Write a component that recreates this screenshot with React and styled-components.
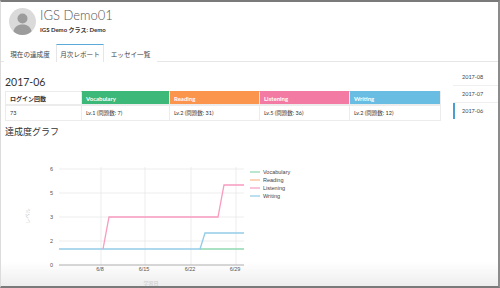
import { createGlobalStyle, styled } from "styled-components";

const GlobalStyle = createGlobalStyle`
  html, body {
    margin: 0;
    padding: 0;
    background: #fff;
  }
  body {
    font-family: "Lato", "Noto Sans CJK JP", sans-serif;
    color: #333;
  }
`;

const Frame = styled.div`
  width: 500px;
  height: 288px;
  box-sizing: border-box;
  border-top: 2px solid #7a7a7a;
  border-right: 2px solid #8c8c8c;
  border-bottom: 2px solid #7a7a7a;
  border-left: 1px solid #dcdcdc;
  background: linear-gradient(to bottom, #fff 0, #fff 260px, #ececec 286px);
  overflow: hidden;
`;

const Header = styled.header`
  display: flex;
  align-items: center;
  gap: 4px;
  padding: 5px 0 0 8px;
  height: 29px;
`;

const Avatar = styled.div`
  width: 27px;
  height: 27px;
  border-radius: 50%;
  background: #dadada;
  overflow: hidden;
  flex-shrink: 0;

  svg {
    display: block;
  }
`;

const NameBlock = styled.div`
  display: flex;
  flex-direction: column;
  padding-bottom: 2px;
`;

const UserName = styled.div`
  font-size: 13px;
  font-weight: 300;
  color: #555;
  line-height: 15px;
`;

const UserSub = styled.div`
  font-size: 6px;
  font-weight: 700;
  color: #333;
  line-height: 9px;
  margin-top: 2px;
`;

const TabBar = styled.nav`
  display: flex;
  margin-top: 8px;
  padding-left: 3px;
  height: 17px;
  border-bottom: 1px solid #e6e6e6;
`;

const Tab = styled.div`
  display: flex;
  align-items: center;
  justify-content: center;
  box-sizing: border-box;
  height: 18px;
  width: ${(props) => props.$w}px;
  font-size: 6.6px;
  white-space: nowrap;
  color: #444;
  background: #fff;
  border-top: 1px solid ${(props) => (props.$active ? "#5aaad8" : "transparent")};
  border-left: 1px solid ${(props) => (props.$active ? "#e6e6e6" : "transparent")};
  border-right: 1px solid ${(props) => (props.$active ? "#e6e6e6" : "transparent")};
`;

const Body = styled.div`
  display: flex;
`;

const Main = styled.main`
  width: 436px;
  padding-left: 4px;
  padding-top: 14px;
`;

const MonthTitle = styled.h2`
  margin: 0;
  font-size: 10.5px;
  font-weight: 400;
  color: #333;
  line-height: 13px;
`;

const Table = styled.div`
  display: grid;
  grid-template-columns: 75px 88px 90px 90px 91px;
  grid-template-rows: 14px 15px;
  margin-top: 2px;
  border: 1px solid #ececec;
  border-top: none;
`;

const Cell = styled.div`
  display: flex;
  align-items: center;
  padding-left: 4px;
  font-size: ${(props) => (props.$head ? "6px" : "5.5px")};
  font-weight: ${(props) => (props.$head ? 700 : 400)};
  color: ${(props) => (props.$bg ? "#fff" : "#333")};
  background: ${(props) => props.$bg || "#fff"};
  border-top: 1px solid ${(props) => props.$bg || "#ececec"};
  border-left: ${(props) => (props.$first ? "none" : "1px solid #ececec")};
  border-bottom: ${(props) => (props.$head ? "1px solid #ececec" : "none")};
  box-sizing: border-box;
  white-space: nowrap;
`;

const GraphTitle = styled.h3`
  margin: 5px 0 0;
  font-size: 9px;
  font-weight: 400;
  color: #333;
  line-height: 11px;
`;

const Chart = styled.svg`
  display: block;
  margin: 2px 0 0 -4px;
  font-family: "Liberation Sans", "Noto Sans CJK JP", sans-serif;
`;

const SideNav = styled.aside`
  margin-left: 12px;
  width: 46px;
  padding-top: 7px;
`;

const NavItem = styled.div`
  height: 16px;
  display: flex;
  align-items: center;
  padding-left: 9px;
  font-size: 5.5px;
  color: #444;
  border-bottom: ${(props) => (props.$last ? "none" : "1px solid #efefef")};
  box-shadow: ${(props) => (props.$active ? "inset 2px 0 0 #4a9fd0" : "none")};
`;

const skills = [
  { name: "Vocabulary", color: "#3cb878", value: "Lv.1 (問題数: 7)", line: "#8fd8b0" },
  { name: "Reading", color: "#fb944d", value: "Lv.2 (問題数: 31)", line: "#f7b98a" },
  { name: "Listening", color: "#f37aa2", value: "Lv.5 (問題数: 36)", line: "#f79bbf" },
  { name: "Writing", color: "#69bce2", value: "Lv.2 (問題数: 12)", line: "#92cbe8" },
];

const tabs = [
  { label: "現在の達成度", w: 52 },
  { label: "月次レポート", w: 48, active: true },
  { label: "エッセイ一覧", w: 53 },
];

const months = ["2017-08", "2017-07", "2017-06"];

// chart coordinates are page coordinates minus this offset
const OY = 138;

function LevelChart() {
  const yTicks = [
    { label: "6", y: 168 },
    { label: "5", y: 192 },
    { label: "3", y: 216 },
    { label: "2", y: 240 },
    { label: "0", y: 264 },
  ];
  const xTicks = [
    { label: "6/8", x: 100 },
    { label: "6/15", x: 144 },
    { label: "6/22", x: 190 },
    { label: "6/29", x: 235 },
  ];
  const y = (v) => v - OY;

  return (
    <Chart width="300" height="148" viewBox="0 0 300 148">
      {yTicks.slice(0, 4).map((t) => (
        <line key={t.label} x1="58" x2="243" y1={y(t.y)} y2={y(t.y)} stroke="#e8e8e8" strokeWidth="0.8" />
      ))}
      {xTicks.map((t) => (
        <line key={t.label} x1={t.x} x2={t.x} y1={y(166)} y2={y(264)} stroke="#e8e8e8" strokeWidth="0.8" />
      ))}
      <line x1="58" x2="243" y1={y(264)} y2={y(264)} stroke="#9a9a9a" strokeWidth="0.8" />
      {yTicks.map((t) => (
        <text key={t.label} x="52" y={y(t.y) + 2} fontSize="5.5" fill="#555" textAnchor="end">
          {t.label}
        </text>
      ))}
      {xTicks.map((t) => (
        <text key={t.label} x={t.x - 1} y={y(270)} fontSize="5.5" fill="#555" textAnchor="middle">
          {t.label}
        </text>
      ))}
      <text
        x="28"
        y={y(215)}
        fontSize="5"
        fill="#c8c8c8"
        textAnchor="middle"
        transform={`rotate(-90 28 ${y(215)})`}
      >
        レベル
      </text>
      <text x="150" y={y(284)} fontSize="5" fill="#c8c8c8" textAnchor="middle">
        学習日
      </text>

      <polyline
        points={`199,${y(248)} 243,${y(248)}`}
        fill="none"
        stroke="#8fd8b0"
        strokeWidth="1.3"
      />
      <polyline
        points={`58,${y(248)} 199,${y(248)} 204,${y(232)} 243,${y(232)}`}
        fill="none"
        stroke="#92cbe8"
        strokeWidth="1.3"
      />
      <polyline
        points={`102,${y(248)} 108,${y(216)} 217,${y(216)} 223,${y(184)} 243,${y(184)}`}
        fill="none"
        stroke="#f79bbf"
        strokeWidth="1.3"
      />

      {skills.map((s, i) => (
        <g key={s.name}>
          <line x1="249" x2="259" y1={y(171 + i * 8)} y2={y(171 + i * 8)} stroke={s.line} strokeWidth="1.2" />
          <text x="262" y={y(173 + i * 8)} fontSize="5.5" fill="#444">
            {s.name}
          </text>
        </g>
      ))}
    </Chart>
  );
}

function App() {
  return (
    <>
      <GlobalStyle />
      <Frame>
        <Header>
          <Avatar>
            <svg width="27" height="27" viewBox="0 0 27 27">
              <circle cx="13.5" cy="10.5" r="5" fill="#9c9c9c" />
              <path d="M4 27 C4 19 8.5 16.5 13.5 16.5 C18.5 16.5 23 19 23 27 Z" fill="#9c9c9c" />
            </svg>
          </Avatar>
          <NameBlock>
            <UserName>IGS Demo01</UserName>
            <UserSub>IGS Demo クラス: Demo</UserSub>
          </NameBlock>
        </Header>

        <TabBar>
          {tabs.map((t) => (
            <Tab key={t.label} $active={t.active} $w={t.w}>
              {t.label}
            </Tab>
          ))}
        </TabBar>

        <Body>
          <Main>
            <MonthTitle>2017-06</MonthTitle>
            <Table>
              <Cell $head $first>ログイン回数</Cell>
              {skills.map((s) => (
                <Cell key={s.name} $head $bg={s.color}>
                  {s.name}
                </Cell>
              ))}
              <Cell $first>73</Cell>
              {skills.map((s) => (
                <Cell key={s.name}>{s.value}</Cell>
              ))}
            </Table>
            <GraphTitle>達成度グラフ</GraphTitle>
            <LevelChart />
          </Main>

          <SideNav>
            {months.map((m, i) => (
              <NavItem key={m} $active={i === 2} $last={i === 2}>
                {m}
              </NavItem>
            ))}
          </SideNav>
        </Body>
      </Frame>
    </>
  );
}

export default App;
